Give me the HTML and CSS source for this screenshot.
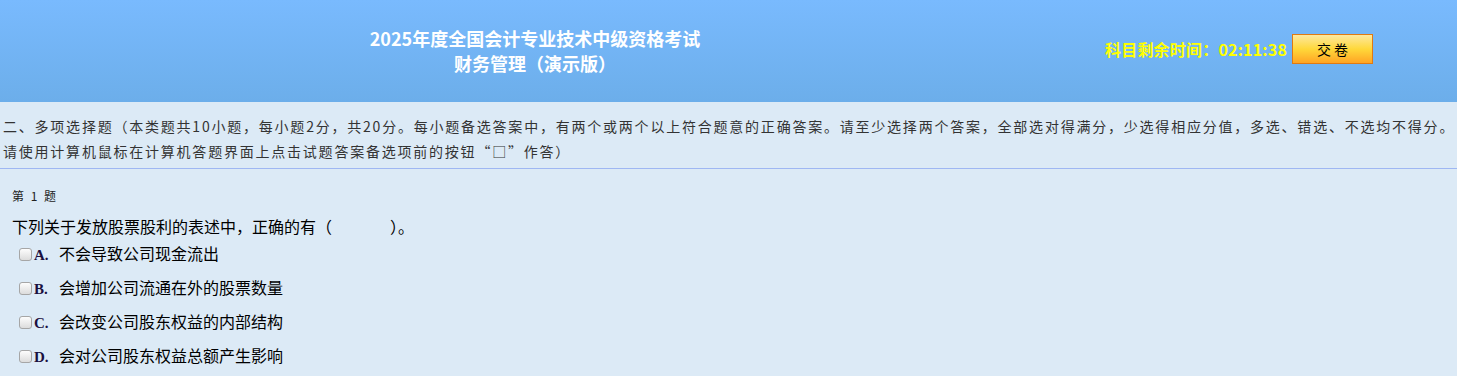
FILE: index.html
```html
<!DOCTYPE html>
<html lang="zh-CN">
<head>
<meta charset="utf-8">
<title>财务管理（演示版）</title>
<link rel="stylesheet" href="styles.css">
</head>
<body>
<header class="top">
  <div class="title">
    <div class="title-line">2025年度全国会计专业技术中级资格考试</div>
    <div class="title-line">财务管理（演示版）</div>
  </div>
  <div class="timer-area">
    <span class="timer">科目剩余时间：02:11:38</span>
    <button class="submit" type="button">交 卷</button>
  </div>
</header>
<section class="intro">
  <div class="intro-line">二、多项选择题（本类题共10小题，每小题2分，共20分。每小题备选答案中，有两个或两个以上符合题意的正确答案。请至少选择两个答案，全部选对得满分，少选得相应分值，多选、错选、不选均不得分。</div>
  <div class="intro-line">请使用计算机鼠标在计算机答题界面上点击试题答案备选项前的按钮“□”作答）</div>
</section>
<section class="question">
  <div class="qno">第&nbsp;1&nbsp;题</div>
  <div class="qtext">下列关于发放股票股利的表述中，正确的有（<span class="blank"></span>）。</div>
  <ul class="options">
    <li class="option"><span class="box"></span><span class="letter">A.</span><span class="otext">不会导致公司现金流出</span></li>
    <li class="option"><span class="box"></span><span class="letter">B.</span><span class="otext">会增加公司流通在外的股票数量</span></li>
    <li class="option"><span class="box"></span><span class="letter">C.</span><span class="otext">会改变公司股东权益的内部结构</span></li>
    <li class="option"><span class="box"></span><span class="letter">D.</span><span class="otext">会对公司股东权益总额产生影响</span></li>
  </ul>
</section>
</body>
</html>
```
FILE: styles.css
```css
* { box-sizing: border-box; }
html, body { margin: 0; padding: 0; }
body {
  background: #dceaf6;
  font-family: "Noto Sans CJK SC", "Noto Sans", sans-serif;
  color: #000;
  width: 1457px;
  overflow: hidden;
}
.top {
  height: 102px;
  background: linear-gradient(#79bafe, #6caeea);
  display: flex;
  align-items: center;
}
.title {
  width: 1070px;
  text-align: center;
  color: #fff;
  font-weight: bold;
  font-size: 18px;
  line-height: 25px;
}
.timer-area {
  display: flex;
  align-items: center;
  padding-left: 35px;
  gap: 5px;
  margin-top: -4px;
}
.timer {
  color: #ffff00;
  font-weight: bold;
  font-size: 16px;
  letter-spacing: 0.2px;
  white-space: nowrap;
}
.submit {
  width: 81px;
  height: 30px;
  border: 1px solid #e07a12;
  background: linear-gradient(#fde8a0 0%, #ffd83a 50%, #ffa424 100%);
  font-family: "Noto Sans CJK SC", sans-serif;
  font-size: 14px;
  color: #000;
  padding: 0;
}
.intro {
  padding: 12px 0 4px 3px;
  border-bottom: 1px solid #9fb7f3;
  color: #333;
  font-size: 14px;
  letter-spacing: 1.78px;
  line-height: 25px;
}
.intro-line { white-space: nowrap; }
.question { padding-left: 12px; }
.qno {
  padding-top: 18px;
  font-size: 12px;
  line-height: 18px;
  color: #222;
  letter-spacing: 2px;
}
.qtext {
  margin-top: 11px;
  font-size: 16px;
  line-height: 20px;
}
.blank { display: inline-block; width: 58px; }
.options { list-style: none; margin: 0; padding: 0 0 0 7px; }
.option {
  height: 34px;
  display: flex;
  align-items: baseline;
  padding-top: 7px;
  line-height: 20px;
}
.box {
  width: 13px;
  height: 13px;
  border: 1px solid #a6a6a6;
  border-radius: 3px;
  background: linear-gradient(#fdfdfd, #dcdcdc);
  margin-right: 2px;
  align-self: flex-start;
  margin-top: 5px;
}
.letter {
  font-family: "Liberation Serif", serif;
  font-weight: bold;
  font-size: 15px;
  color: #1a1040;
  width: 25px;
}
.otext { font-size: 16px; }
```
